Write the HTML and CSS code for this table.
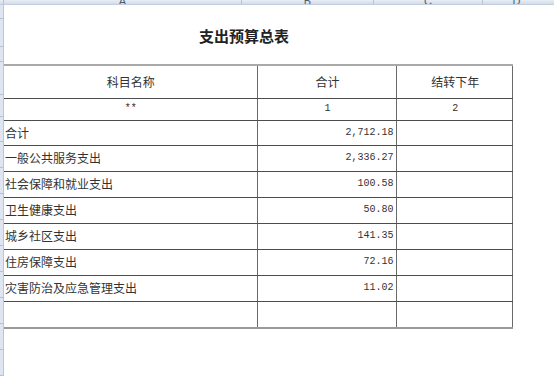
FILE: index.html
```html
<!DOCTYPE html>
<html lang="zh">
<head>
<meta charset="utf-8">
<title>支出预算总表</title>
<link rel="stylesheet" href="styles.css">
</head>
<body>
<div class="sheet">
  <div class="colbar">
    <div class="corner"></div>
    <div class="col col-a">A</div>
    <div class="col col-b">B</div>
    <div class="col col-c">C</div>
    <div class="col col-d">D</div>
  </div>
  <div class="main">
    <div class="rowbar">
      <div class="rh h14"></div>
      <div class="rh h28"></div>
      <div class="rh h15"></div>
      <div class="rh h33"></div>
      <div class="rh h22"></div>
      <div class="rh h25"></div>
      <div class="rh h26"></div>
      <div class="rh h26"></div>
      <div class="rh h26"></div>
      <div class="rh h26"></div>
      <div class="rh h26"></div>
      <div class="rh h26"></div>
      <div class="rh h26"></div>
      <div class="rh h26"></div>
      <div class="rh h26"></div>
    </div>
    <div class="content">
      <div class="title">支出预算总表</div>
      <table class="grid">
        <tr class="r-head">
          <td class="c-a center">科目名称</td>
          <td class="c-b center">合计</td>
          <td class="c-c center">结转下年</td>
        </tr>
        <tr class="r-idx">
          <td class="center num">**</td>
          <td class="center num">1</td>
          <td class="center num">2</td>
        </tr>
        <tr class="r-25">
          <td>合计</td>
          <td class="num right">2,712.18</td>
          <td></td>
        </tr>
        <tr class="r-26">
          <td>一般公共服务支出</td>
          <td class="num right">2,336.27</td>
          <td></td>
        </tr>
        <tr class="r-26">
          <td>社会保障和就业支出</td>
          <td class="num right">100.58</td>
          <td></td>
        </tr>
        <tr class="r-26">
          <td>卫生健康支出</td>
          <td class="num right">50.80</td>
          <td></td>
        </tr>
        <tr class="r-26">
          <td>城乡社区支出</td>
          <td class="num right">141.35</td>
          <td></td>
        </tr>
        <tr class="r-26">
          <td>住房保障支出</td>
          <td class="num right">72.16</td>
          <td></td>
        </tr>
        <tr class="r-26">
          <td>灾害防治及应急管理支出</td>
          <td class="num right">11.02</td>
          <td></td>
        </tr>
        <tr class="r-26 r-last">
          <td></td>
          <td></td>
          <td></td>
        </tr>
      </table>
    </div>
  </div>
</div>
</body>
</html>
```

FILE: styles.css
```css
html, body {
  margin: 0;
  padding: 0;
  background: #ffffff;
}
body {
  width: 554px;
  height: 376px;
  overflow: hidden;
  font-family: "Noto Sans CJK SC", "Liberation Sans", sans-serif;
  color: #333333;
}
.sheet {
  display: flex;
  flex-direction: column;
  height: 376px;
}
.colbar {
  display: flex;
  height: 8px;
  background: linear-gradient(#e8edf5, #d3dcea);
  border-bottom: 1px solid #c2cddd;
  box-sizing: border-box;
  overflow: hidden;
}
.corner {
  width: 4px;
  border-right: 1px solid #b7c4d8;
  box-sizing: border-box;
}
.col {
  box-sizing: border-box;
  border-right: 1px solid #b7c4d8;
  text-align: center;
  font-family: "Liberation Sans", sans-serif;
  font-size: 11px;
  line-height: 1;
  color: #4d5d75;
  margin-top: -4px;
  padding-top: 0;
  height: 12px;
}
.col-a { width: 238px; }
.col-b { width: 132px; }
.col-c { width: 109px; }
.col-d { flex: 1; border-right: none; padding-right: 4px; }

.main {
  display: flex;
  flex: 1;
}
.rowbar {
  width: 4px;
  flex: none;
  background: #dfe6f1;
  border-right: 1px solid #b9c6da;
  box-sizing: border-box;
  display: flex;
  flex-direction: column;
}
.rh {
  border-bottom: 1px solid #b3c1d6;
  box-sizing: border-box;
  flex: none;
}
.h14 { height: 14px; }
.h15 { height: 15px; }
.h22 { height: 22px; }
.h25 { height: 25px; }
.h26 { height: 26px; }
.h28 { height: 28px; }
.h33 { height: 33px; }

.content {
  flex: 1;
  display: flex;
  flex-direction: column;
}
.title {
  height: 59px;
  box-sizing: border-box;
  padding-top: 21px;
  padding-right: 70px;
  text-align: center;
  font-size: 15px;
  font-weight: 700;
  line-height: 20px;
  color: #222222;
}
.grid {
  border-collapse: collapse;
  width: 509px;
  table-layout: fixed;
  font-size: 12px;
  color: #333333;
}
.grid td {
  padding: 0 0 0 1px;
  border-left: 1px solid #6a6a6a;
  border-right: 1px solid #6a6a6a;
  border-bottom: 1px solid #4d4d4d;
  white-space: nowrap;
  overflow: hidden;
  vertical-align: middle;
  line-height: 14px;
}
.grid tr td:first-child {
  border-left: none;
}
.c-a { width: 252px; }
.c-b { width: 139px; }
.c-c { width: 115px; }
.r-head td {
  height: 33px;
  border-top: 2px solid #a9a9a9;
  box-sizing: border-box;
}
.r-idx td { height: 21px; }
.r-25 td { height: 24px; }
.r-26 td { height: 25px; }
.r-last td {
  border-bottom: 2px solid #9a9a9a;
}
.center { text-align: center; }
.right {
  text-align: right;
  padding-right: 3px !important;
}
.num {
  font-family: "Liberation Mono", monospace;
  font-size: 10px;
  color: #333333;
}
```
